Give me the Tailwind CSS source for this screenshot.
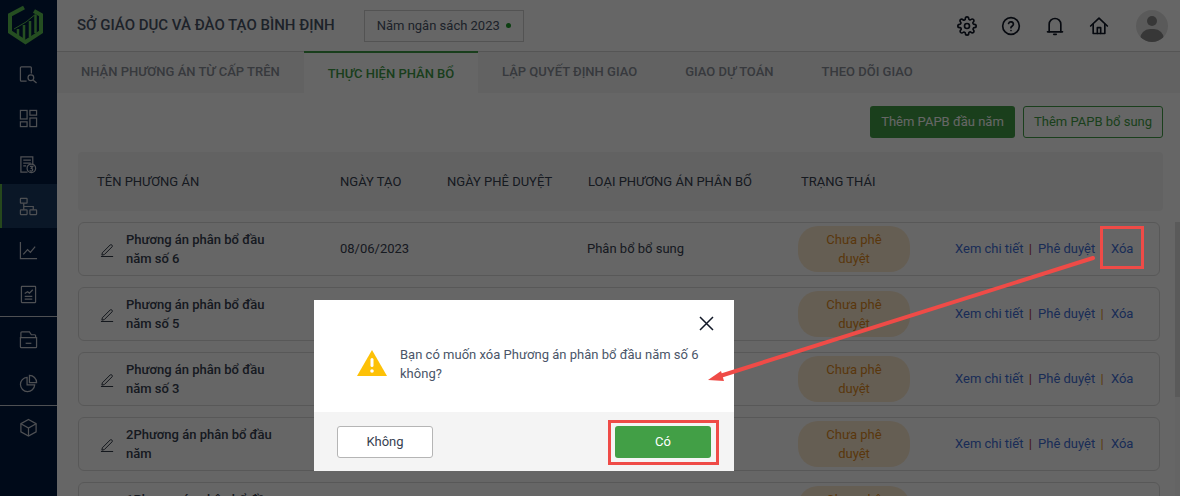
<!DOCTYPE html>
<html lang="en">
<head>
    <meta charset="UTF-8">
    <title>Thực hiện phân bổ</title>
    <script src="https://cdn.jsdelivr.net/npm/@tailwindcss/browser@4"></script>
</head>
<body class="font-['Roboto',sans-serif] overflow-hidden">
<div class="relative w-[1180px] h-[496px] overflow-hidden flex bg-white">

    <!-- sidebar -->
    <aside class="w-[57px] h-full shrink-0 bg-[#001a40] flex flex-col text-[#c4c8d0]">
        <div class="h-[52px]">
            <svg width="57" height="52" viewBox="0 0 57 52" fill="none">
                <path d="M24 7.500L10 15V32L25.500 42L41 32V15L34 11" stroke="#5cc254" stroke-width="4"/>
                <path d="M18 37V29M24 39V25M30 37V21M35.500 33V15" stroke="#5cc254" stroke-width="2.500"/>
                <path d="M14 29L26 22L37 13" stroke="#5cc254" stroke-width="1"/>
            </svg>
        </div>
        <div class="h-[44px] flex items-center justify-center">
            <svg width="19" height="19" viewBox="0 0 20 20" fill="none" stroke="currentColor" stroke-width="1.300"><path d="M8 17H2.500a1 1 0 0 1-1-1V3a1 1 0 0 1 1-1H12a1 1 0 0 1 1 1v6"/><circle cx="12.500" cy="13.500" r="3"/><path d="M15 16l3.500 3"/></svg>
        </div>
        <div class="h-[44px] flex items-center justify-center">
            <svg width="19" height="19" viewBox="0 0 20 20" fill="none" stroke="currentColor" stroke-width="1.300"><rect x="1.500" y="1.500" width="7" height="9"/><rect x="11.500" y="1.500" width="7" height="5"/><rect x="1.500" y="13.500" width="7" height="5"/><rect x="11.500" y="9.500" width="7" height="9"/></svg>
        </div>
        <div class="h-[44px] flex items-center justify-center pt-[4px]">
            <svg width="19" height="19" viewBox="0 0 20 20" fill="none" stroke="currentColor" stroke-width="1.300"><path d="M9 18H2V2h12.500v8"/><path d="M4.500 5.500h8M4.500 8.500h8M4.500 11.500h3"/><circle cx="13" cy="14" r="4.500"/><path d="M11.500 12h3l-1.500 2a1.500 1.500 0 1 1-1.500 2"/></svg>
        </div>
        <div class="h-[44px] flex items-center justify-center bg-[#1a3a63] border-l-2 border-[#5fb548] pr-[2px]">
            <svg width="19" height="19" viewBox="0 0 20 20" fill="none" stroke="currentColor" stroke-width="1.300"><rect x="1.500" y="1.500" width="7" height="5" rx="0.500"/><rect x="1.500" y="13.500" width="7" height="5" rx="0.500"/><rect x="11.500" y="13.500" width="7" height="5" rx="0.500"/><path d="M5 6.500v7M5 10h10v3.500"/></svg>
        </div>
        <div class="h-[44px] flex items-center justify-center">
            <svg width="19" height="19" viewBox="0 0 20 20" fill="none" stroke="currentColor" stroke-width="1.300"><path d="M1.500 1v17.500H19"/><path d="M4.500 14l4.500-5 3 3 5-6"/></svg>
        </div>
        <div class="h-[44px] flex items-center justify-center border-b border-[#c4c8d0] box-content">
            <svg width="17" height="19" viewBox="0 0 18 20" fill="none" stroke="currentColor" stroke-width="1.300"><rect x="1.500" y="1.500" width="15" height="17" rx="0.500"/><path d="M5 9l3-2 2 1.500L13.500 5M5 12h8M5 15h8"/></svg>
        </div>
        <div class="h-[44px] flex items-center justify-center">
            <svg width="19" height="19" viewBox="0 0 20 20" fill="none" stroke="currentColor" stroke-width="1.300"><path d="M2 8V3a1 1 0 0 1 1-1h8l2 3h3.500a1 1 0 0 1 1 1v2"/><path d="M1.500 8h17v9.500a1 1 0 0 1-1 1h-15a1 1 0 0 1-1-1z"/><path d="M7 14h6"/></svg>
        </div>
        <div class="h-[44px] flex items-center justify-center border-b border-[#c4c8d0] box-content">
            <svg width="19" height="19" viewBox="0 0 20 20" fill="none" stroke="currentColor" stroke-width="1.300"><path d="M8.500 3.500a7.500 7.500 0 1 0 8 8H8.500z"/><path d="M11 1.500a7.500 7.500 0 0 1 7.500 7.500H11z"/></svg>
        </div>
        <div class="h-[42px] flex items-center justify-center">
            <svg width="19" height="19" viewBox="0 0 20 20" fill="none" stroke="currentColor" stroke-width="1.300"><path d="M10 1.500l8 4.500v8.500l-8 4.500-8-4.500V6z"/><path d="M2 6l8 4.500L18 6M10 10.500V19"/></svg>
        </div>
    </aside>

    <main class="flex-1 min-w-0 flex flex-col">
        <!-- header -->
        <header class="h-[52px] shrink-0 border-b border-[#d4d4d4] flex items-center pl-[20px] pr-[12px]">
            <span class="text-[15px] font-medium text-[#4a5568] whitespace-nowrap">SỞ GIÁO DỤC VÀ ĐÀO TẠO BÌNH ĐỊNH</span>
            <div class="ml-[29px] w-[160px] h-[32px] border border-[#cfcfcf] flex items-center justify-center gap-[6px] text-[13px] text-[#4a5568]">
                <span>Năm ngân sách 2023</span><span class="w-[5px] h-[5px] rounded-full bg-[#1f9d2b]"></span>
            </div>
            <div class="ml-auto flex items-center text-[#111827]">
                <svg class="w-[20px] h-[20px]" viewBox="0 0 24 24" fill="none" stroke="currentColor" stroke-width="2" stroke-linecap="round" stroke-linejoin="round"><circle cx="12" cy="12" r="3"/><path d="M19.400 15a1.650 1.650 0 0 0 .33 1.820l.06.06a2 2 0 1 1-2.830 2.830l-.06-.06a1.650 1.650 0 0 0-2.820 1.170V21a2 2 0 1 1-4 0v-.09a1.650 1.650 0 0 0-2.830-1.150l-.06.06a2 2 0 1 1-2.830-2.830l.06-.06A1.650 1.650 0 0 0 3.090 14H3a2 2 0 1 1 0-4h.09a1.650 1.650 0 0 0 1.150-2.830l-.06-.06a2 2 0 1 1 2.830-2.830l.06.06A1.650 1.650 0 0 0 10 3.090V3a2 2 0 1 1 4 0v.09a1.650 1.650 0 0 0 2.830 1.150l.06-.06a2 2 0 1 1 2.830 2.830l-.06.06A1.650 1.650 0 0 0 20.910 10H21a2 2 0 1 1 0 4h-.09a1.650 1.650 0 0 0-1.510 1z"/></svg>
                <svg class="w-[20px] h-[20px] ml-[24px]" viewBox="0 0 24 24" fill="none" stroke="currentColor" stroke-width="2" stroke-linecap="round" stroke-linejoin="round"><circle cx="12" cy="12" r="10"/><path d="M9.100 9a3 3 0 0 1 5.800 1c0 2-3 2.500-3 4"/><path d="M12 17.500v.01"/></svg>
                <svg class="w-[20px] h-[20px] ml-[24px]" viewBox="0 0 24 24" fill="none" stroke="currentColor" stroke-width="2" stroke-linecap="round" stroke-linejoin="round"><path d="M5 19V10a7 7 0 0 1 14 0v9"/><path d="M3 19h18"/><path d="M10.500 22h3"/></svg>
                <svg class="w-[20px] h-[20px] ml-[24px]" viewBox="0 0 24 24" fill="none" stroke="currentColor" stroke-width="2" stroke-linecap="round" stroke-linejoin="round"><path d="M2 12L12 2.500 22 12"/><path d="M5 10v11h14V10"/><path d="M10 21v-7h4v7"/></svg>
                <div class="relative w-[32px] h-[32px] ml-[27px] rounded-full bg-[#e2e2e2] overflow-hidden">
                    <span class="absolute left-[11px] top-[6px] w-[10px] h-[10px] rounded-full bg-[#8a8a8a]"></span>
                    <span class="absolute left-[4px] top-[19px] w-[24px] h-[20px] rounded-full bg-[#8a8a8a]"></span>
                </div>
            </div>
        </header>

        <!-- tabs -->
        <nav class="h-[41px] shrink-0 bg-[#f5f5f5] flex text-[13px] font-medium text-[#8a8f99]">
            <a class="w-[247px] pl-[24px] pt-[10px] whitespace-nowrap">NHẬN PHƯƠNG ÁN TỪ CẤP TRÊN</a>
            <a class="w-[174px] -mt-[1px] bg-white border-t-2 border-[#3f9b48] text-[#3f9b48] text-center pt-[11px] whitespace-nowrap">THỰC HIỆN PHÂN BỔ</a>
            <a class="pl-[24px] pt-[10px] whitespace-nowrap">LẬP QUYẾT ĐỊNH GIAO</a>
            <a class="pl-[48px] pt-[10px] whitespace-nowrap">GIAO DỰ TOÁN</a>
            <a class="pl-[48px] pt-[10px] whitespace-nowrap">THEO DÕI GIAO</a>
        </nav>

        <!-- content -->
        <section class="pl-[21px] pr-[17px] min-w-0">
            <div class="flex justify-end gap-[8px] mt-[13px]">
                <button class="w-[145px] h-[32px] rounded-[3px] bg-[#429f46] text-white text-[13px]">Thêm PAPB đầu năm</button>
                <button class="w-[140px] h-[32px] rounded-[3px] border border-[#429f46] text-[#429f46] text-[13px]">Thêm PAPB bổ sung</button>
            </div>

            <div class="mt-[14px] h-[59px] rounded-[4px] bg-[#f5f5f5] flex items-center text-[13px] text-[#374151] pt-[1px]">
                <span class="w-[262px] pl-[19px] shrink-0">TÊN PHƯƠNG ÁN</span>
                <span class="w-[107px] shrink-0">NGÀY TẠO</span>
                <span class="w-[141px] shrink-0">NGÀY PHÊ DUYỆT</span>
                <span class="w-[213px] shrink-0 whitespace-nowrap">LOẠI PHƯƠNG ÁN PHÂN BỔ</span>
                <span>TRẠNG THÁI</span>
            </div>

            <div class="mt-[11px] flex flex-col gap-[11px] w-[1082px]">
                <div class="h-[54px] rounded-[6px] border border-[#dcdcdc] flex items-center text-[13px] text-[#374151] shrink-0">
                    <svg class="w-[15px] h-[15px] ml-[21px] shrink-0" viewBox="0 0 16 16" fill="none" stroke="#1f2937" stroke-width="1"><path d="M2.500 11.500L11 3a1.500 1.500 0 0 1 2 2l-8.500 8.500-2.500.5z"/><path d="M1 15.500h13"/></svg>
                    <div class="w-[214px] ml-[11px] shrink-0 font-medium leading-[19px]">Phương án phân bổ đầu<br>năm số 6</div>
                    <div class="w-[247px] shrink-0">08/06/2023</div>
                    <div class="w-[211px] shrink-0">Phân bổ bổ sung</div>
                    <div class="w-[112px] h-[46px] shrink-0 rounded-[20px] bg-[#fdebd0] text-[#e08a1e] text-center leading-[19px] pt-[4px] px-[20px]">Chưa phê duyệt</div>
                    <div class="ml-[45px] whitespace-nowrap text-[#3f6fd8]">Xem chi tiết <span class="text-[#a33] ml-[2px] mr-[3px]">|</span> Phê duyệt <span class="text-[#e08a1e] ml-[2px] mr-[4px]">|</span> Xóa</div>
                </div>
                <div class="h-[54px] rounded-[6px] border border-[#dcdcdc] flex items-center text-[13px] text-[#374151] shrink-0">
                    <svg class="w-[15px] h-[15px] ml-[21px] shrink-0" viewBox="0 0 16 16" fill="none" stroke="#1f2937" stroke-width="1"><path d="M2.500 11.500L11 3a1.500 1.500 0 0 1 2 2l-8.500 8.500-2.500.5z"/><path d="M1 15.500h13"/></svg>
                    <div class="w-[214px] ml-[11px] shrink-0 font-medium leading-[19px]">Phương án phân bổ đầu<br>năm số 5</div>
                    <div class="w-[247px] shrink-0"></div>
                    <div class="w-[211px] shrink-0"></div>
                    <div class="w-[112px] h-[46px] shrink-0 rounded-[20px] bg-[#fdebd0] text-[#e08a1e] text-center leading-[19px] pt-[4px] px-[20px]">Chưa phê duyệt</div>
                    <div class="ml-[45px] whitespace-nowrap text-[#3f6fd8]">Xem chi tiết <span class="text-[#a33] ml-[2px] mr-[3px]">|</span> Phê duyệt <span class="text-[#e08a1e] ml-[2px] mr-[4px]">|</span> Xóa</div>
                </div>
                <div class="h-[54px] rounded-[6px] border border-[#dcdcdc] flex items-center text-[13px] text-[#374151] shrink-0">
                    <svg class="w-[15px] h-[15px] ml-[21px] shrink-0" viewBox="0 0 16 16" fill="none" stroke="#1f2937" stroke-width="1"><path d="M2.500 11.500L11 3a1.500 1.500 0 0 1 2 2l-8.500 8.500-2.500.5z"/><path d="M1 15.500h13"/></svg>
                    <div class="w-[214px] ml-[11px] shrink-0 font-medium leading-[19px]">Phương án phân bổ đầu<br>năm số 3</div>
                    <div class="w-[247px] shrink-0"></div>
                    <div class="w-[211px] shrink-0"></div>
                    <div class="w-[112px] h-[46px] shrink-0 rounded-[20px] bg-[#fdebd0] text-[#e08a1e] text-center leading-[19px] pt-[4px] px-[20px]">Chưa phê duyệt</div>
                    <div class="ml-[45px] whitespace-nowrap text-[#3f6fd8]">Xem chi tiết <span class="text-[#a33] ml-[2px] mr-[3px]">|</span> Phê duyệt <span class="text-[#e08a1e] ml-[2px] mr-[4px]">|</span> Xóa</div>
                </div>
                <div class="h-[54px] rounded-[6px] border border-[#dcdcdc] flex items-center text-[13px] text-[#374151] shrink-0">
                    <svg class="w-[15px] h-[15px] ml-[21px] shrink-0" viewBox="0 0 16 16" fill="none" stroke="#1f2937" stroke-width="1"><path d="M2.500 11.500L11 3a1.500 1.500 0 0 1 2 2l-8.500 8.500-2.500.5z"/><path d="M1 15.500h13"/></svg>
                    <div class="w-[214px] ml-[11px] shrink-0 font-medium leading-[19px]">2Phương án phân bổ đầu<br>năm</div>
                    <div class="w-[247px] shrink-0"></div>
                    <div class="w-[211px] shrink-0"></div>
                    <div class="w-[112px] h-[46px] shrink-0 rounded-[20px] bg-[#fdebd0] text-[#e08a1e] text-center leading-[19px] pt-[4px] px-[20px]">Chưa phê duyệt</div>
                    <div class="ml-[45px] whitespace-nowrap text-[#3f6fd8]">Xem chi tiết <span class="text-[#a33] ml-[2px] mr-[3px]">|</span> Phê duyệt <span class="text-[#e08a1e] ml-[2px] mr-[4px]">|</span> Xóa</div>
                </div>
                <div class="h-[54px] rounded-[6px] border border-[#dcdcdc] flex items-center text-[13px] text-[#374151] shrink-0">
                    <svg class="w-[15px] h-[15px] ml-[21px] shrink-0" viewBox="0 0 16 16" fill="none" stroke="#1f2937" stroke-width="1"><path d="M2.500 11.500L11 3a1.500 1.500 0 0 1 2 2l-8.500 8.500-2.500.5z"/><path d="M1 15.500h13"/></svg>
                    <div class="w-[214px] ml-[11px] shrink-0 font-medium leading-[19px]">1Phương án phân bổ đầu<br>năm</div>
                    <div class="w-[247px] shrink-0"></div>
                    <div class="w-[211px] shrink-0"></div>
                    <div class="w-[112px] h-[46px] shrink-0 rounded-[20px] bg-[#fdebd0] text-[#e08a1e] text-center leading-[19px] pt-[4px] px-[20px]">Chưa phê duyệt</div>
                </div>
            </div>
        </section>
    </main>

    <!-- scrollbar -->
    <div class="absolute left-[1175px] top-[222px] w-[5px] h-[274px] bg-[#fafafa]">
        <div class="w-full h-[175px] bg-[#e2e2e2]"></div>
    </div>

    <!-- dim overlay -->
    <div class="absolute inset-0 bg-black/60"></div>

    <!-- modal -->
    <div class="absolute left-[314px] top-[300px] w-[420px] h-[171px] bg-white flex flex-col">
        <div class="h-[112px] relative flex items-start pt-[45px] pl-[43px]">
            <svg class="w-[30px] h-[26px] shrink-0 mt-[5px]" viewBox="0 0 30 26"><path d="M15 0L30 26H0z" fill="#fdc107"/><rect x="13.500" y="8" width="3" height="9" rx="1.500" fill="#fff"/><circle cx="15" cy="21" r="1.800" fill="#fff"/></svg>
            <p class="ml-[13px] w-[310px] text-[13px] leading-[19px] tracking-[0.01px] text-[#4a5568]">Bạn có muốn xóa Phương án phân bổ đầu năm số 6 không?</p>
            <svg class="absolute right-[20px] top-[16px] w-[15px] h-[15px]" viewBox="0 0 15 15" fill="none" stroke="#111827" stroke-width="1.500"><path d="M1 1l13 13M14 1L1 14"/></svg>
        </div>
        <div class="flex-1 bg-[#f4f4f4] flex items-center justify-between pl-[23px] pr-[23px]">
            <button class="w-[96px] h-[32px] bg-white border border-[#b5b5b5] rounded-[3px] text-[13px] text-[#374151]">Không</button>
            <button class="w-[96px] h-[32px] bg-[#429f46] rounded-[3px] text-[13px] text-white">Có</button>
        </div>
    </div>

    <!-- annotations -->
    <div class="absolute left-[1100px] top-[226px] w-[44px] h-[43px] border-[3px] border-[#ef4b47]"></div>
    <div class="absolute left-[608px] top-[420px] w-[111px] h-[45px] border-[3px] border-[#ef4b47]"></div>
    <svg class="absolute left-0 top-0 w-[1180px] h-[496px] pointer-events-none" viewBox="0 0 1180 496" fill="none">
        <path d="M1093 258L720 376" stroke="#ef4b47" stroke-width="4" stroke-linecap="round"/>
        <path d="M708 380L721 371L724 381z" fill="#ef4b47"/>
    </svg>
</div>
</body>
</html>
